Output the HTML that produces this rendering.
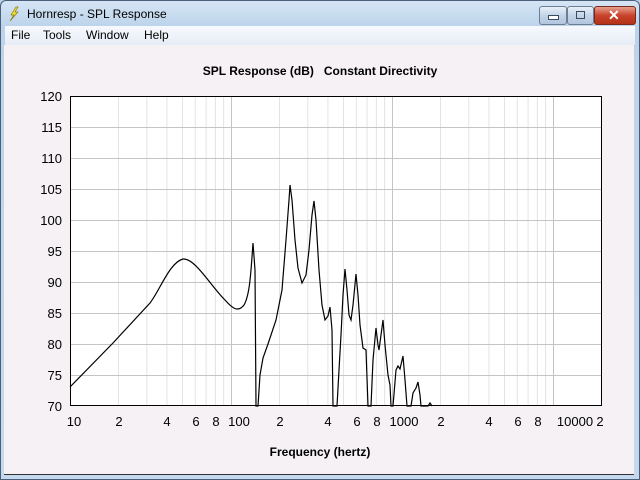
<!DOCTYPE html>
<html><head><meta charset="utf-8"><style>
html,body{margin:0;padding:0;width:640px;height:480px;overflow:hidden;background:#bcd3ea;font-family:"Liberation Sans",sans-serif}
.win{position:absolute;left:0;top:0;width:638px;height:478px;border:1px solid #4a5f7a;border-radius:6px 6px 0 0;background:linear-gradient(#d6e5f5,#bcd3ea 26px,#c5d9ee)}
.title{position:absolute;left:26px;top:6px;font-size:12px;color:#000}
.menu{position:absolute;left:4px;top:25px;width:630px;height:19px;background:linear-gradient(#f7f9fd,#e6ecf6);border-bottom:1px solid #b6bcc6;font-size:12px}
.menu span{position:absolute;top:2px}
.client{position:absolute;left:4px;top:45px;width:630px;height:429px;background:#f5f1f5;border-bottom:1px solid #333}
.btn{position:absolute;top:5px;height:17px;border:1px solid #6c7d94;border-radius:3px;background:linear-gradient(#e9f0f8,#c3d4e8 50%,#b2c6de)}
</style></head><body>
<div class="win">
<svg style="position:absolute;left:6px;top:5px" width="14" height="16"><path d="M9 1 L4 9 L7 9 L3 15 L11 6 L8 6 L11 1Z" fill="#f2e23a" stroke="#8a7a10" stroke-width="0.7"/></svg>
<div class="title">Hornresp - SPL Response</div>
<div class="btn" style="left:538px;width:26px"><div style="position:absolute;left:8px;top:8px;width:9px;height:3px;border:1px solid #3a4a60;background:#fff"></div></div>
<div class="btn" style="left:566px;width:25px"><div style="position:absolute;left:8px;top:4px;width:7px;height:6px;border:1px solid #3a4a60;"></div></div>
<div class="btn" style="left:593px;width:40px;border-color:#7a2a1a;background:linear-gradient(#e8a090,#c8432b 50%,#b23218)"><div style="position:absolute;left:13px;top:0px;color:#fff;font-weight:bold;font-size:14px">✕</div></div>
<div class="menu"><span style="left:6px">File</span><span style="left:38px">Tools</span><span style="left:81px">Window</span><span style="left:139px">Help</span></div>
</div>
<div class="client"></div>
<svg style="position:absolute;left:0;top:0" width="640" height="480" font-family="Liberation Sans, sans-serif">
<rect x="70" y="96" width="532" height="310" fill="#fff"/>
<g stroke="#e4e4e4" stroke-width="1">
<path d="M118.5 96V406M146.8 96V406M166.9 96V406M182.5 96V406M195.3 96V406M206.1 96V406M215.4 96V406M223.6 96V406
M279.5 96V406M307.8 96V406M327.9 96V406M343.5 96V406M356.3 96V406M367.1 96V406M376.4 96V406M384.6 96V406
M440.5 96V406M468.8 96V406M488.9 96V406M504.5 96V406M517.3 96V406M528.1 96V406M537.4 96V406M545.6 96V406"/>
</g>
<g stroke="#c4c4c4" stroke-width="1">
<path d="M231.5 96V406M392.5 96V406M553.5 96V406
M70 127.5H602M70 158.5H602M70 189.5H602M70 220.5H602M70 251.5H602M70 282.5H602M70 313.5H602M70 344.5H602M70 375.5H602"/>
</g>
<rect x="70.5" y="96.5" width="531" height="309" fill="none" stroke="#000"/>
<path fill="none" stroke="#000" stroke-width="1.2" d="M70 387 L113 343 L150 303 C160 290 170 262 183 259 C195 258 210 285 225 300 C232 308 238 313 244 305 C250 295 251 270 253 243 L255 270 L256 406 L258 406 L260 375 L263 358 L268 344 L276 320 L282 290 L286 240 L289 200 L290 185 L292 200 L295 240 L298 268 L302 283 L306 275 L309 250 L312 215 L314 201 L316 220 L319 270 L322 305 L325 320 L328 316 L330 307 L332 330 L333 406 L337 406 L339 370 L341 335 L343 295 L345 269 L347 290 L349 315 L351 320 L353 305 L356 274 L358 295 L360 325 L363 348 L366 350 L368 406 L371 406 L373 360 L376 328 L378 345 L379 350 L381 335 L383 320 L385 345 L388 375 L390 385 L391 406 L393 406 L396 370 L398 366 L400 369 L403 356 L405 380 L407 406 L411 406 L413 393 L416 388 L418 382 L420 395 L421 406 L428 406 L430 403 L432 406"/>
<g font-size="13" fill="#000" text-anchor="end">
<text x="62" y="101">120</text><text x="62" y="132">115</text><text x="62" y="163">110</text><text x="62" y="194">105</text><text x="62" y="225">100</text><text x="62" y="256">95</text><text x="62" y="287">90</text><text x="62" y="318">85</text><text x="62" y="349">80</text><text x="62" y="380">75</text><text x="62" y="411">70</text>
</g>
<g font-size="13" fill="#000" text-anchor="middle">
<text x="74" y="426">10</text><text x="119" y="426">2</text><text x="167" y="426">4</text><text x="196" y="426">6</text><text x="216" y="426">8</text><text x="239" y="426">100</text><text x="280" y="426">2</text><text x="328" y="426">4</text><text x="357" y="426">6</text><text x="377" y="426">8</text><text x="404" y="426">1000</text><text x="441" y="426">2</text><text x="489" y="426">4</text><text x="518" y="426">6</text><text x="538" y="426">8</text><text x="575" y="426">10000</text><text x="600" y="426">2</text>
</g>
<text x="320" y="75" font-size="12" font-weight="bold" text-anchor="middle">SPL Response (dB) &#160; Constant Directivity</text>
<text x="320" y="456" font-size="12" font-weight="bold" text-anchor="middle">Frequency (hertz)</text>
</svg>
</body></html>
